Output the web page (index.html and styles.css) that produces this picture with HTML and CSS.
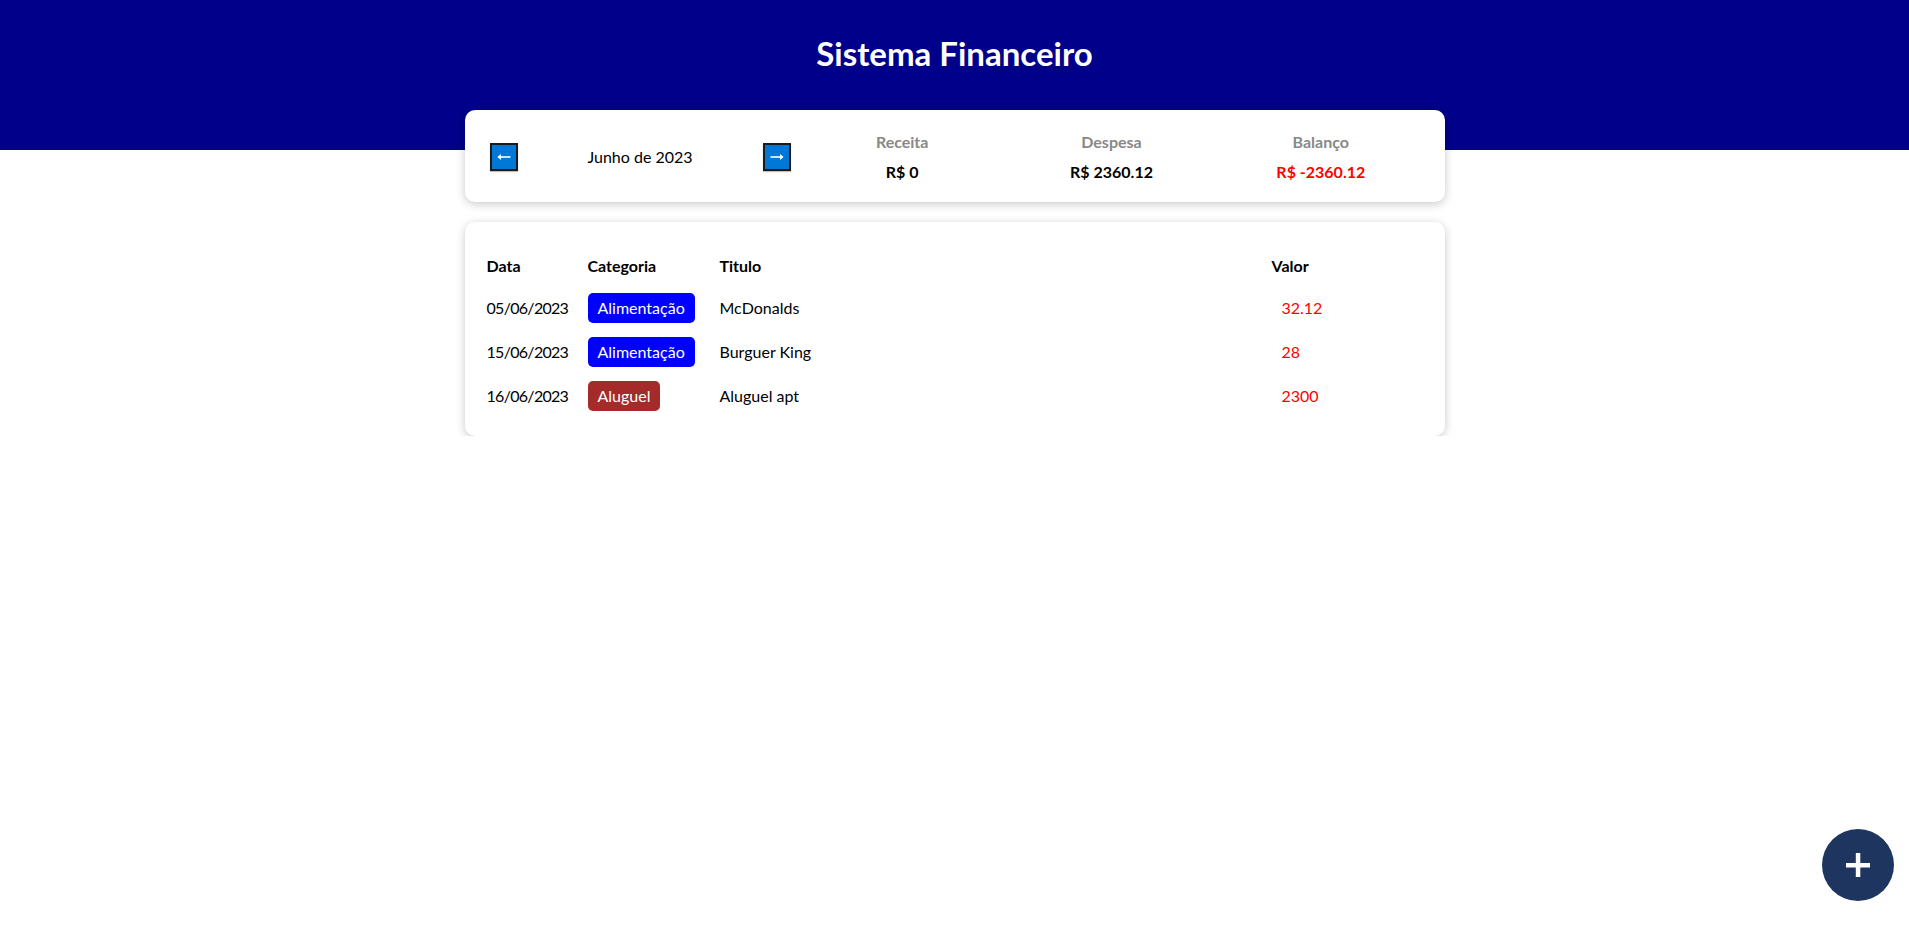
FILE: index.html
```html
<!DOCTYPE html>
<html lang="pt-BR">
<head>
<meta charset="utf-8">
<title>Sistema Financeiro</title>
<link rel="stylesheet" href="styles.css">
</head>
<body>
<header class="top">
  <h1 class="title">Sistema Financeiro</h1>
</header>
<main class="content">
  <section class="card info">
    <div class="month">
      <button class="arrow" type="button" aria-label="Mês anterior">
        <svg width="14" height="8" viewBox="0 0 14 8"><path d="M1 4H13.5" stroke="#fff" stroke-width="1.6"/><path d="M0.5 4L4 1V7Z" fill="#fff"/></svg>
      </button>
      <div class="month-name">Junho de 2023</div>
      <button class="arrow" type="button" aria-label="Próximo mês">
        <svg width="14" height="8" viewBox="0 0 14 8"><path d="M0.5 4H13" stroke="#fff" stroke-width="1.6"/><path d="M13.5 4L10 1V7Z" fill="#fff"/></svg>
      </button>
    </div>
    <div class="resume">
      <div class="resume-item">
        <div class="resume-label">Receita</div>
        <div class="resume-value">R$ 0</div>
      </div>
      <div class="resume-item">
        <div class="resume-label">Despesa</div>
        <div class="resume-value">R$ 2360.12</div>
      </div>
      <div class="resume-item">
        <div class="resume-label">Balanço</div>
        <div class="resume-value negative">R$ -2360.12</div>
      </div>
    </div>
  </section>
  <section class="card list">
    <table class="table">
      <thead>
        <tr>
          <th class="col-date">Data</th>
          <th class="col-cat">Categoria</th>
          <th class="col-title">Titulo</th>
          <th class="col-value">Valor</th>
        </tr>
      </thead>
      <tbody>
        <tr>
          <td class="date">05/06/2023</td>
          <td><span class="badge food">Alimentação</span></td>
          <td>McDonalds</td>
          <td><span class="value expense">32.12</span></td>
        </tr>
        <tr>
          <td class="date">15/06/2023</td>
          <td><span class="badge food">Alimentação</span></td>
          <td>Burguer King</td>
          <td><span class="value expense">28</span></td>
        </tr>
        <tr>
          <td class="date">16/06/2023</td>
          <td><span class="badge rent">Aluguel</span></td>
          <td>Aluguel apt</td>
          <td><span class="value expense">2300</span></td>
        </tr>
      </tbody>
    </table>
  </section>
</main>
<button class="fab" type="button" aria-label="Adicionar">
  <svg width="24" height="24" viewBox="0 0 24 24"><rect x="0" y="10" width="24" height="4.5" fill="#fff"/><rect x="9.8" y="0" width="4.5" height="24" fill="#fff"/></svg>
</button>
</body>
</html>
```

FILE: styles.css
```css
* { box-sizing: border-box; }

body {
  margin: 0;
  font-family: Lato, "Open Sans", sans-serif;
  font-size: 16px;
  color: #000;
  background: #fff;
}

.top {
  height: 150px;
  background: #00008b;
  padding-top: 32px;
  text-align: center;
}

.title {
  margin: 0;
  color: #fff;
  font-size: 33px;
  line-height: 42px;
  font-weight: 700;
}

.content {
  width: 980px;
  margin: -40px auto 0;
}

.card {
  background: #fff;
  border-radius: 10px;
  box-shadow: 0 2px 10px rgba(0, 0, 0, 0.22);
}

.info {
  display: flex;
  align-items: center;
  padding: 22px 19px 20px 25px;
}

.month {
  width: 301px;
  display: flex;
  align-items: center;
}

.arrow {
  width: 28px;
  height: 28px;
  padding: 0;
  border: 2px solid #1b1b1b;
  background: #0078d7;
  display: flex;
  align-items: center;
  justify-content: center;
  box-shadow: 0 1px 1px rgba(0, 0, 0, 0.25);
}

.arrow svg { display: block; }

.month-name {
  flex: 1;
  text-align: center;
  line-height: 20px;
}

.resume {
  flex: 1;
  margin-left: 7px;
  display: flex;
}

.resume-item {
  flex: 1;
  text-align: center;
}

.resume-label {
  color: #888;
  font-weight: 700;
  line-height: 20px;
}

.resume-value {
  margin-top: 10px;
  font-weight: 700;
  line-height: 20px;
}

.negative { color: #f00; }

.list {
  margin-top: 20px;
  padding: 20px 20px 18px;
}

.table {
  width: 100%;
  border-collapse: collapse;
}

.table th {
  text-align: left;
  font-weight: 700;
  line-height: 20px;
  padding: 14px 0 10px 2px;
}

.table td {
  padding: 7px 0 7px 2px;
  line-height: 30px;
  height: 44px;
}

.table .date { letter-spacing: -0.7px; }

.col-date { width: 101px; }
.col-cat { width: 132px; }
.col-title { width: 552px; }

.badge {
  display: inline-block;
  padding: 0 10px;
  height: 30px;
  line-height: 30px;
  border-radius: 5px;
  color: #fff;
}

.food { background: #0000ff; }
.rent { background: #a52a2a; }

.value { padding-left: 10px; }
.expense { color: #f00; }

.fab {
  position: fixed;
  right: 15px;
  bottom: 31px;
  width: 72px;
  height: 72px;
  border: 0;
  border-radius: 50%;
  background: #1e3560;
  display: flex;
  align-items: center;
  justify-content: center;
  padding: 0;
}

.fab svg { display: block; }
```
